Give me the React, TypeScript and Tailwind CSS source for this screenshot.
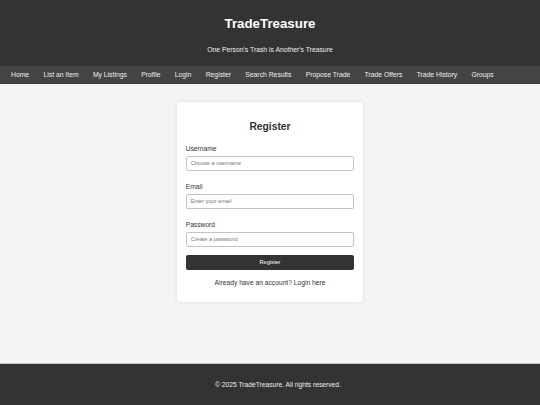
import { useState } from 'react';

const links = [
  'Home',
  'List an Item',
  'My Listings',
  'Profile',
  'Login',
  'Register',
  'Search Results',
  'Propose Trade',
  'Trade Offers',
  'Trade History',
  'Groups',
];

function Field({ label, type, placeholder, value, onChange }: {
  label: string;
  type: string;
  placeholder: string;
  value: string;
  onChange: (v: string) => void;
}) {
  return (
    <div className="mb-[11.8px]">
      <label className="block text-[6.7px] leading-[7.7px] mb-[4px] text-[#333]">{label}</label>
      <input
        type={type}
        value={value}
        onChange={e => onChange(e.target.value)}
        placeholder={placeholder}
        className="block w-full h-[14.5px] border border-[#c4c4c4] rounded-[2px] px-[4px] text-[5.6px] text-[#333] placeholder:text-[#777] bg-white focus:outline-none"
      />
    </div>
  );
}

export default function App() {
  const [username, setUsername] = useState('');
  const [email, setEmail] = useState('');
  const [password, setPassword] = useState('');

  return (
    <div className="h-screen flex flex-col bg-[#f4f4f4] font-['Liberation_Sans',Arial,sans-serif] text-[#333]">
      {/* Header */}
      <header className="bg-[#333] text-white text-center pt-[15.5px] pb-[12.5px]">
        <h1 className="text-[13.3px] leading-[15px] font-bold">TradeTreasure</h1>
        <p className="mt-[15px] text-[6.8px] leading-[8px] text-[#eee]">One Person's Trash is Another's Treasure</p>
      </header>

      {/* Nav */}
      <nav className="bg-[#444] h-[18px] border-b border-[#3a3a3a] flex items-center pl-[11px] gap-[14.3px]">
        {links.map(l => (
          <a key={l} href="#" className="text-[6.8px] leading-[8px] text-[#eee] whitespace-nowrap">{l}</a>
        ))}
      </nav>

      {/* Main */}
      <main className="flex-1 pt-[18px]">
        <div className="w-[186px] mx-auto bg-white rounded-[3px] shadow-[0_0_4px_rgba(0,0,0,0.1)] px-[8.7px] pt-[19px] pb-[16px]">
          <h2 className="text-center text-[10.3px] leading-[11.5px] font-bold mb-[12px]">Register</h2>
          <form onSubmit={e => e.preventDefault()}>
            <Field label="Username" type="text" placeholder="Choose a username" value={username} onChange={setUsername} />
            <Field label="Email" type="email" placeholder="Enter your email" value={email} onChange={setEmail} />
            <div>
              <label className="block text-[6.7px] leading-[7.7px] mb-[4px] text-[#333]">Password</label>
              <input
                type="password"
                value={password}
                onChange={e => setPassword(e.target.value)}
                placeholder="Create a password"
                className="block w-full h-[14.5px] border border-[#c4c4c4] rounded-[2px] px-[4px] text-[5.6px] text-[#333] placeholder:text-[#777] bg-white focus:outline-none"
              />
            </div>
            <button type="submit" className="mt-[6.6px] w-full h-[15px] bg-[#333] text-white rounded-[2px] text-[5.6px] leading-[15px]">
              Register
            </button>
          </form>
          <p className="mt-[7.9px] text-center text-[6.7px] leading-[7.7px]">
            Already have an account? <a href="#" className="text-[#333]">Login here</a>
          </p>
        </div>
      </main>

      {/* Footer */}
      <footer className="h-[42px] bg-[#333] border-t border-[#c8c8c8] flex items-center justify-center pl-[16px]">
        <p className="text-[6.7px] leading-[8px] text-[#eee]">© 2025 TradeTreasure. All rights reserved.</p>
      </footer>
    </div>
  );
}
